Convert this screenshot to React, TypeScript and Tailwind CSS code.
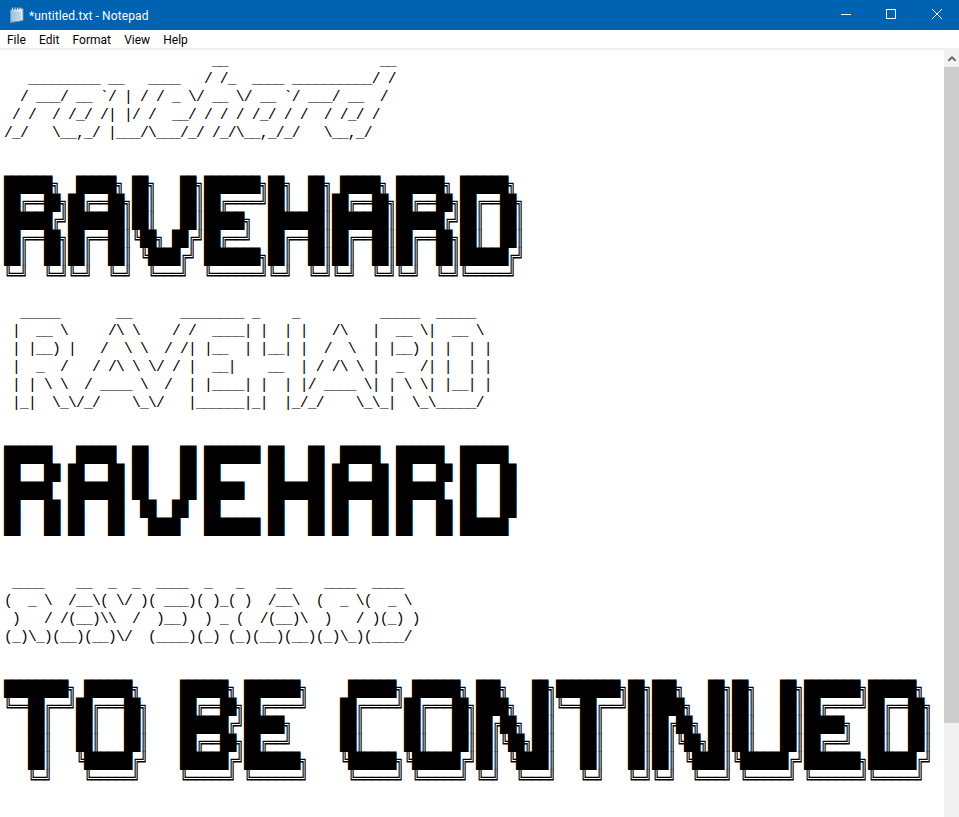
import React from 'react';

const slant = [
  '                          __                   __',
  '   _________ __   ____   / /_  ____ __________/ /',
  '  / ___/ __ `/ | / / _ \\/ __ \\/ __ `/ ___/ __  /',
  ' / /  / /_/ /| |/ /  __/ / / / /_/ / /  / /_/ /',
  '/_/   \\__,_/ |___/\\___/_/ /_/\\__,_/_/   \\__,_/',
];

const shadow = [
  '██████╗  █████╗ ██╗   ██╗███████╗██╗  ██╗ █████╗ ██████╗ ██████╗',
  '██╔══██╗██╔══██╗██║   ██║██╔════╝██║  ██║██╔══██╗██╔══██╗██╔══██╗',
  '██████╔╝███████║██║   ██║█████╗  ███████║███████║██████╔╝██║  ██║',
  '██╔══██╗██╔══██║╚██╗ ██╔╝██╔══╝  ██╔══██║██╔══██║██╔══██╗██║  ██║',
  '██║  ██║██║  ██║ ╚████╔╝ ███████╗██║  ██║██║  ██║██║  ██║██████╔╝',
  '╚═╝  ╚═╝╚═╝  ╚═╝  ╚═══╝  ╚══════╝╚═╝  ╚═╝╚═╝  ╚═╝╚═╝  ╚═╝╚═════╝',
];

const big = [
  '  _____       __      ________ _    _          _____  _____',
  ' |  __ \\     /\\ \\    / /  ____| |  | |   /\\   |  __ \\|  __ \\',
  ' | |__) |   /  \\ \\  / /| |__  | |__| |  /  \\  | |__) | |  | |',
  ' |  _  /   / /\\ \\ \\/ / |  __|    __  | / /\\ \\ |  _  /| |  | |',
  ' | | \\ \\  / ____ \\  /  | |____| |  | |/ ____ \\| | \\ \\| |__| |',
  ' |_|  \\_\\/_/    \\_\\/   |______|_|  |_/_/    \\_\\_|  \\_\\_____/',
];

const solid = [
  '██████   █████  ██    ██ ███████ ██   ██  █████  ██████  ██████',
  '██   ██ ██   ██ ██    ██ ██      ██   ██ ██   ██ ██   ██ ██   ██',
  '██████  ███████ ██    ██ █████   ███████ ███████ ██████  ██   ██',
  '██   ██ ██   ██  ██  ██  ██      ██   ██ ██   ██ ██   ██ ██   ██',
  '██   ██ ██   ██   ████   ███████ ██   ██ ██   ██ ██   ██ ██████',
];

const bulb = [
  ' ____    __  _  _  ____  _   _    __    ____  ____',
  '(  _ \\  /__\\( \\/ )( ___)( )_( )  /__\\  (  _ \\(  _ \\',
  ' )   / /(__)\\\\  /  )__)  ) _ (  /(__)\\  )   / )(_) )',
  '(_)\\_)(__)(__)\\/  (____)(_) (_)(__)(__)(_)\\_)(____/',
];

const continued = [
  '████████╗ ██████╗     ██████╗ ███████╗     ██████╗ ██████╗ ███╗   ██╗████████╗██╗███╗   ██╗██╗   ██╗███████╗██████╗',
  '╚══██╔══╝██╔═══██╗    ██╔══██╗██╔════╝    ██╔════╝██╔═══██╗████╗  ██║╚══██╔══╝██║████╗  ██║██║   ██║██╔════╝██╔══██╗',
  '   ██║   ██║   ██║    ██████╔╝█████╗      ██║     ██║   ██║██╔██╗ ██║   ██║   ██║██╔██╗ ██║██║   ██║█████╗  ██║  ██║',
  '   ██║   ██║   ██║    ██╔══██╗██╔══╝      ██║     ██║   ██║██║╚██╗██║   ██║   ██║██║╚██╗██║██║   ██║██╔══╝  ██║  ██║',
  '   ██║   ╚██████╔╝    ██████╔╝███████╗    ╚██████╗╚██████╔╝██║ ╚████║   ██║   ██║██║ ╚████║╚██████╔╝███████╗██████╔╝',
  '   ╚═╝    ╚═════╝     ╚═════╝ ╚══════╝     ╚═════╝ ╚═════╝ ╚═╝  ╚═══╝   ╚═╝   ╚═╝╚═╝  ╚═══╝ ╚═════╝ ╚══════╝╚═════╝',
];

const Ascii = ({ rows, className }: { rows: string[]; className: string }) => (
  <pre className={`translate-y-[2px] font-['Liberation_Mono',monospace] text-[14.67px] leading-[18px] tracking-[-0.8px] text-black ${className}`}>
    {rows.join('\n')}
  </pre>
);

// 15.5px DejaVu blocks fill the 18px line, squeezed back to the 8px cell with a little overlap
const Blocks = ({ rows, className }: { rows: string[]; className: string }) => (
  <pre className={`w-max origin-left scale-x-[0.9] font-['DejaVu_Sans_Mono',monospace] text-[15.5px] leading-[18px] tracking-[-0.444px] text-black ${className}`}>
    {rows.join('\n')}
  </pre>
);

const menus = ['File', 'Edit', 'Format', 'View', 'Help'];

const NotepadIcon = () => (
  <svg width="16" height="16" viewBox="0 0 16 16">
    <defs>
      <linearGradient id="page" x1="0" y1="0" x2="1" y2="0">
        <stop offset="0" stopColor="#8fb7d6" />
        <stop offset="0.55" stopColor="#d5e4f0" />
        <stop offset="1" stopColor="#f2f6fa" />
      </linearGradient>
    </defs>
    <path d="M1.5 3 L14 1.5 L14 13.5 L1.5 15.5 Z" fill="url(#page)" stroke="#6d93b3" strokeWidth="1" />
    <path d="M5 6.5L12 5.7M5 8.5L12 7.7M5 10.5L12 9.7M5 12.5L12 11.7" stroke="#a9bfd2" strokeWidth="1" />
    <path d="M3.5 0.5v3M6 0.5v3M8.5 0.5v2.5M11 0.5v2.5" stroke="#e4ebf2" strokeWidth="1" />
  </svg>
);

export default function App() {
  return (
    <div className="flex h-[817px] w-[959px] flex-col overflow-hidden bg-white">
      <header className="flex h-[30px] items-center justify-between bg-[#0063b1] font-['Roboto',sans-serif] text-[12px] text-white">
        <div className="flex items-center gap-[4px] pl-[9px]">
          <NotepadIcon />
          <span className="pt-px tracking-[0.1px]">*untitled.txt - Notepad</span>
        </div>
        <div className="mr-[-1px] flex h-full pb-[2px]">
          <button className="flex w-[46px] items-center justify-center pl-[2px]">
            <span className="h-px w-[10px] bg-white" />
          </button>
          <button className="flex w-[46px] items-center justify-center">
            <span className="h-[10px] w-[10px] border border-white" />
          </button>
          <button className="flex w-[46px] items-center justify-center">
            <svg width="10" height="10" viewBox="0 0 10 10" stroke="white" strokeWidth="1">
              <path d="M0 0L10 10M10 0L0 10" />
            </svg>
          </button>
        </div>
      </header>
      <nav className="flex h-[20px] items-center border-b-2 border-[#f0f0f0] pt-[2px] pl-[0.4px] font-['Roboto',sans-serif] text-[12px] text-black">
        {menus.map((m) => (
          <span key={m} className="px-[6.6px]">
            {m}
          </span>
        ))}
      </nav>
      <div className="flex flex-1 overflow-hidden">
        <div className="flex-1 overflow-hidden pl-[4px]">
          <Ascii rows={slant} className="mb-[36px]" />
          <Blocks rows={shadow} className="mb-[18px]" />
          <Ascii rows={big} className="mb-[36px]" />
          <Blocks rows={solid} className="mb-[36px]" />
          <Ascii rows={bulb} className="mb-[36px]" />
          <Blocks rows={continued} className="" />
        </div>
        <div className="flex w-[15px] flex-col bg-[#f0f0f0]">
          <div className="flex h-[17px] items-center justify-center">
            <svg width="8" height="5" viewBox="0 0 8 5" fill="#606060">
              <path d="M4 0L8 4V5H6.5L4 2.5L1.5 5H0V4Z" />
            </svg>
          </div>
          <div className="h-[656px] bg-[#cdcdcd]" />
        </div>
      </div>
    </div>
  );
}
